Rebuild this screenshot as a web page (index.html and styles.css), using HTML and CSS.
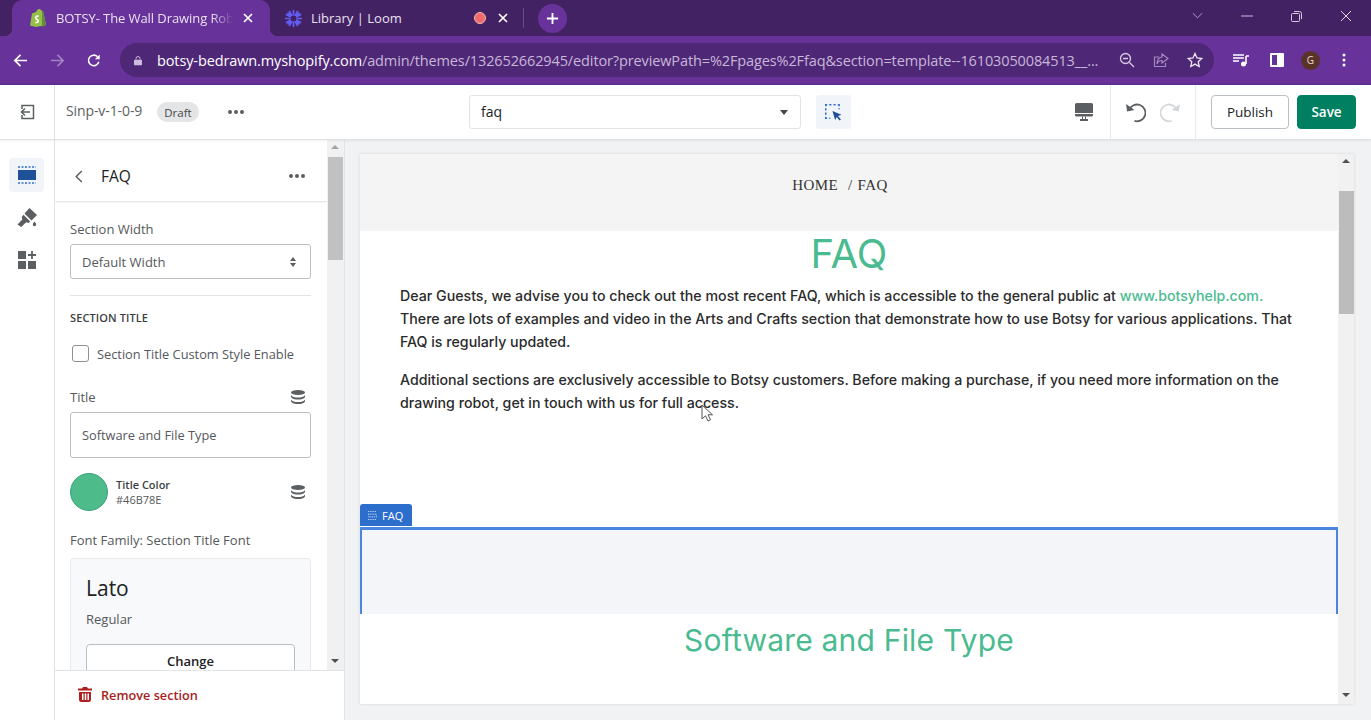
FILE: index.html
```html
<!DOCTYPE html>
<html lang="en">
<head>
<meta charset="utf-8">
<title>Botsy theme editor</title>
<link rel="stylesheet" href="styles.css">
</head>
<body>
<div class="tabstrip">
  <div class="tab active">
    <svg class="fav" viewBox="0 0 16 18"><path fill="#95bf47" d="M2 4.500 6 3c.6-1.500 1.700-3 3-3 1 0 2 .6 2.400 1.500L13 2l3 14-10 2-6-1.500z"/><path fill="#5e8e3e" d="M12 2l1 0 3 14-4 2z"/><path fill="#fff" d="M8.800 6.500l-.5 1.600c-1.500-.6-2.300.2-1.600.9.800.8 2.300 1.300 2.300 3 0 2-2.200 3-4 1.900l.4-1.500c1 .7 2 .5 2-.2 0-1-2.500-1.400-2.500-3.500 0-2 2.200-3.200 3.900-2.200z"/></svg>
    <span class="tab-title">BOTSY- The Wall Drawing Robo</span>
    <svg class="tab-x" viewBox="0 0 10 10"><path d="M1 1l8 8M9 1 1 9" stroke="#fff" stroke-width="1.700"/></svg>
  </div>
  <div class="tab second">
    <svg class="fav" viewBox="0 0 20 20"><g stroke="#625df5" stroke-width="2"><path d="M10 0v20M0 10h20M3 3l14 14M17 3 3 17M5 1l10 18M15 1 5 19M1 5l18 10M19 5 1 15"/></g><circle cx="10" cy="10" r="3.500" fill="#42215f"/></svg>
    <span class="tab-title">Library | Loom</span>
    <span class="rec"></span>
    <svg class="tab-x" viewBox="0 0 10 10"><path d="M1 1l8 8M9 1 1 9" stroke="#fff" stroke-width="1.700"/></svg>
  </div>
  <span class="tab-sep"></span>
  <span class="newtab"><svg viewBox="0 0 14 14"><path d="M7 1v12M1 7h12" stroke="#fff" stroke-width="2"/></svg></span>
  <div class="winctl">
    <svg viewBox="0 0 12 8" class="w-chev"><path d="M1 1l5 5 5-5" fill="none" stroke="#b9a7cb" stroke-width="1"/></svg>
    <svg viewBox="0 0 12 2" class="w-min"><path d="M0 1h12" stroke="#c9bcd6"/></svg>
    <svg viewBox="0 0 12 12" class="w-max"><path d="M1.500 3.500h6a1 1 0 0 1 1 1v6a1 1 0 0 1-1 1h-6a1 1 0 0 1-1-1v-6a1 1 0 0 1 1-1zM3 1.500h5.500a2 2 0 0 1 2 2V9" fill="none" stroke="#d6cbe0"/></svg>
    <svg viewBox="0 0 12 12" class="w-close"><path d="M1 1l10 10M11 1 1 11" stroke="#e4dcea" stroke-width="1"/></svg>
  </div>
</div>

<div class="toolbar">
  <svg class="nav" viewBox="0 0 16 16"><path d="M15 8H2M8 2 2 8l6 6" fill="none" stroke="#fff" stroke-width="1.800"/></svg>
  <svg class="nav" viewBox="0 0 16 16"><path d="M1 8h13M8 2l6 6-6 6" fill="none" stroke="#a184c0" stroke-width="1.800"/></svg>
  <svg class="nav" viewBox="0 0 16 16"><path d="M13.500 9.500A6 6 0 1 1 12 3.700" fill="none" stroke="#fff" stroke-width="1.800"/><path d="M14.500 1v5.500H9z" fill="#fff"/></svg>
  <div class="omnibox">
    <svg class="lock" viewBox="0 0 10 12"><path d="M2.500 5V3.500a2.500 2.500 0 0 1 5 0V5" fill="none" stroke="#cdbddc" stroke-width="1.200"/><rect y="5" width="10" height="7" rx="1" fill="#cdbddc"/></svg>
    <span class="url"><b>botsy-bedrawn.myshopify.com</b>/admin/themes/132652662945/editor?previewPath=%2Fpages%2Ffaq&amp;section=template--16103050084513__...</span>
    <svg class="omni-ic" viewBox="0 0 16 16"><circle cx="6.500" cy="6.500" r="5" fill="none" stroke="#d8cbe4" stroke-width="1.300"/><path d="M10.500 10.500 15 15M4 6.500h5" stroke="#d8cbe4" stroke-width="1.300"/></svg>
    <svg class="omni-ic" viewBox="0 0 16 16"><path d="M6 5H1.500v9.500h11V11M9 2l6 4.500L9 11V8.500C6 8.500 4.500 10 4 12c0-4 2-6.500 5-7z" fill="none" stroke="#a58ac0" stroke-width="1.200"/></svg>
    <svg class="omni-ic" viewBox="0 0 16 16"><path d="M8 1.500l2 4.500 4.800.5-3.600 3.200 1 4.800L8 12.100l-4.200 2.400 1-4.800L1.200 6.500 6 6z" fill="none" stroke="#ece5f2" stroke-width="1.300"/></svg>
  </div>
  <div class="ext">
    <svg viewBox="0 0 16 14" class="ext-media"><path d="M0 2h11M0 5h11M0 8h6" stroke="#fff" stroke-width="1.500"/><path d="M13 3v8" stroke="#fff" stroke-width="1.600"/><circle cx="10.500" cy="11" r="2.500" fill="#fff"/><path d="M13 3h3" stroke="#fff" stroke-width="1.500"/></svg>
    <svg viewBox="0 0 14 14" class="ext-side"><rect width="14" height="14" rx="1" fill="#fff"/><rect x="2" y="2" width="5" height="10" fill="#67329a"/></svg>
    <span class="avatar">G</span>
    <svg viewBox="0 0 4 14" class="ext-menu"><circle cx="2" cy="2" r="1.500" fill="#fff"/><circle cx="2" cy="7" r="1.500" fill="#fff"/><circle cx="2" cy="12" r="1.500" fill="#fff"/></svg>
  </div>
</div>

<div class="topbar">
  <div class="exit">
    <svg viewBox="0 0 16 16"><path d="M3 5V1.500h11.500v13H3V11" fill="none" stroke="#5c5f62" stroke-width="1.500"/><path d="M11 8H3M6 4.500 2.500 8 6 11.500" fill="none" stroke="#5c5f62" stroke-width="1.500"/></svg>
  </div>
  <div class="theme-info">
    <span class="theme-name">Sinp-v-1-0-9</span>
    <span class="badge">Draft</span>
    <svg class="dots" viewBox="0 0 16 4"><circle cx="2" cy="2" r="2"/><circle cx="8" cy="2" r="2"/><circle cx="14" cy="2" r="2"/></svg>
  </div>
  <div class="page-select"><span>faq</span><i class="caret"></i></div>
  <span class="inspect">
    <svg viewBox="0 0 16 16"><path d="M0 .7h13M.7 0v13" stroke="#2c6ecb" stroke-width="1.400" stroke-dasharray="2 2" fill="none"/><path d="M13.300 0v5M0 13.300h5" stroke="#2c6ecb" stroke-width="1.400" stroke-dasharray="2 2" fill="none"/><path d="M7 6.500 15.500 10l-3.200 1.300 2.700 3.200-1.300 1-2.600-3.200L9.500 15z" fill="#1f5199"/></svg>
  </span>
  <div class="top-right">
    <svg class="desktop" viewBox="0 0 18 18"><path fill="#5c5f62" d="M1.500 0h15A1.500 1.500 0 0 1 18 1.500V12a1.500 1.500 0 0 1-1.500 1.500h-15A1.500 1.500 0 0 1 0 12V1.500A1.500 1.500 0 0 1 1.500 0z"/><path fill="#fff" d="M0 10h18v1H0z"/><path fill="#5c5f62" d="M7 13.500h1v2.500h2v-2.500h1V16h2v2H5v-2h2z"/></svg>
    <div class="history">
      <svg viewBox="0 0 20 20"><path d="M4 7.500A8 8 0 1 1 9 18" fill="none" stroke="#5c5f62" stroke-width="1.700"/><path d="M1 2l1 7 7-1.500z" fill="#5c5f62"/></svg>
      <svg viewBox="0 0 20 20"><path d="M16 7.500A8 8 0 1 0 11 18" fill="none" stroke="#d5d8da" stroke-width="1.700"/><path d="M19 2l-1 7-7-1.500z" fill="#d5d8da"/></svg>
    </div>
    <div class="actions">
      <span class="btn">Publish</span>
      <span class="btn primary">Save</span>
    </div>
  </div>
</div>

<div class="main">
  <nav class="rail">
    <span class="rail-item on">
      <svg viewBox="0 0 18 18"><path d="M0 1h18M0 17h18" stroke="#2c6ecb" stroke-width="1.600" stroke-dasharray="2 1.500"/><rect y="4" width="18" height="10" fill="#1f5199"/></svg>
    </span>
    <span class="rail-item">
      <svg viewBox="0 0 20 20"><path fill="#5c5f62" d="M12.500 0 20 7l-5.500 5.500-7-7zM6.500 6.800l6.700 6.700-1.800 1.500-2.200-.8-5 4.800L.5 16.500l4.800-5-.6-2.500z"/><path fill="#5c5f62" d="M17.500 13.500c1 1.300 1.700 2 1.700 3a1.700 1.700 0 0 1-3.400 0c0-1 .7-1.700 1.700-3z"/></svg>
    </span>
    <span class="rail-item">
      <svg viewBox="0 0 18 18"><path fill="#5c5f62" d="M0 0h8v8H0zM0 10h8v8H0zM10 10h8v8h-8z"/><path d="M14 0v8M10 4h8" stroke="#5c5f62" stroke-width="1.800"/></svg>
    </span>
  </nav>

  <aside class="panel">
    <div class="panel-scroll">
      <div class="panel-body">
        <header class="panel-head">
          <svg class="back" viewBox="0 0 8 14"><path d="M7 1 1 7l6 6" fill="none" stroke="#5c5f62" stroke-width="1.600"/></svg>
          <h2>FAQ</h2>
          <svg class="dots" viewBox="0 0 16 4"><circle cx="2" cy="2" r="2"/><circle cx="8" cy="2" r="2"/><circle cx="14" cy="2" r="2"/></svg>
        </header>
        <div class="settings">
          <label class="lbl first">Section Width</label>
          <div class="select"><span>Default Width</span>
            <svg viewBox="0 0 6 10"><path d="M3 0l3 4H0zM3 10 0 6h6z" fill="#5c5f62"/></svg>
          </div>
          <hr class="rule">
          <h3 class="cap">SECTION TITLE</h3>
          <div class="check"><span class="box"></span><span>Section Title Custom Style Enable</span></div>
          <div class="lbl-row"><span class="lbl">Title</span>
            <svg class="db" viewBox="0 0 14 14"><ellipse cx="7" cy="2.500" rx="7" ry="2.500"/><path d="M0 5c1 2 4 2.500 7 2.500S13 7 14 5v2c-1 2-4 2.500-7 2.500S1 9 0 7zM0 9.500c1 2 4 2.500 7 2.500s6-.5 7-2.500v2C13 13.500 10 14 7 14s-6-.5-7-2.500z"/></svg>
          </div>
          <div class="input">Software and File Type</div>
          <div class="color-row">
            <span class="swatch"></span>
            <div class="color-text"><b>Title Color</b><span>#46B78E</span></div>
            <svg class="db" viewBox="0 0 14 14"><ellipse cx="7" cy="2.500" rx="7" ry="2.500"/><path d="M0 5c1 2 4 2.500 7 2.500S13 7 14 5v2c-1 2-4 2.500-7 2.500S1 9 0 7zM0 9.500c1 2 4 2.500 7 2.500s6-.5 7-2.500v2C13 13.500 10 14 7 14s-6-.5-7-2.500z"/></svg>
          </div>
          <label class="lbl font-lbl">Font Family: Section Title Font</label>
          <div class="font-card">
            <div class="font-name">Lato</div>
            <div class="font-style">Regular</div>
            <div class="change">Change</div>
          </div>
        </div>
      </div>
      <div class="scrollbar">
        <i class="arrow up light"></i>
        <span class="thumb"></span>
        <i class="arrow down"></i>
      </div>
    </div>
    <footer class="panel-foot">
      <svg viewBox="0 0 14 15"><path fill="#b01f1f" d="M5 0h4l1 1.500h4v2H0v-2h4zM1 5h12v7.500a2.500 2.500 0 0 1-2.500 2.500h-7A2.500 2.500 0 0 1 1 12.500zm3 1.500V13h1.500V6.500zm2.700 0V13h1.600V6.500zm2.800 0V13H11V6.500z"/></svg>
      <span>Remove section</span>
    </footer>
  </aside>

  <section class="stage">
    <div class="frame">
      <div class="page">
        <div class="crumbs"><span>HOME</span><span class="slash">/</span><span>FAQ</span></div>
        <h1 class="page-title">FAQ</h1>
        <div class="copy">
          <p>Dear Guests, we advise you to check out the most recent FAQ, which is accessible to the general public at <a>www.botsyhelp.com.</a><br>There are lots of examples and video in the Arts and Crafts section that demonstrate how to use Botsy for various applications. That FAQ is regularly updated.</p>
          <p>Additional sections are exclusively accessible to Botsy customers. Before making a purchase, if you need more information on the drawing robot, get in touch with us for full access.</p>
        </div>
        <div class="selected">
          <span class="sel-tag">
            <svg viewBox="0 0 10 10"><path d="M0 .5h10M0 9.500h10M0 3.500h10v3H0z" fill="none" stroke="#cfe0f7" stroke-dasharray="1.500 1"/></svg>
            FAQ
          </span>
        </div>
        <h2 class="sec-title">Software and File Type</h2>
      </div>
      <div class="page-scroll">
        <i class="arrow up dark"></i>
        <span class="page-thumb"></span>
        <i class="arrow down dark"></i>
      </div>
    </div>
    <svg class="cursor" viewBox="0 0 12 18"><path d="M1 1v14l3.500-3.200L7 17l2.500-1.200L7 10.800h4.500z" fill="#fff" stroke="#555" stroke-width="1"/></svg>
  </section>
</div>
</body>
</html>
```
FILE: styles.css
```css
* { box-sizing: border-box; }
html, body { margin: 0; height: 720px; overflow: hidden; }
body {
  width: 1371px;
  display: flex;
  flex-direction: column;
  font-family: "Open Sans", "Noto Sans", sans-serif;
  color: #202223;
  background: #fff;
}
svg { display: block; flex: none; }

/* browser tabs */
.tabstrip {
  height: 36px;
  flex: none;
  background: #432263;
  display: flex;
  align-items: center;
  padding-left: 12px;
  color: #e9e1f0;
  font-size: 13px;
}
.tab { height: 36px; display: flex; align-items: center; flex: none; }
.tab.active {
  width: 258px;
  background: #67329a;
  border-radius: 10px 10px 0 0;
  padding-left: 18px;
  position: relative;
}
.tab.active::before, .tab.active::after {
  content: "";
  position: absolute;
  bottom: 0;
  width: 8px;
  height: 8px;
}
.tab.active::before { left: -8px; background: radial-gradient(circle at 0 0, transparent 8px, #67329a 8.500px); }
.tab.active::after { right: -8px; background: radial-gradient(circle at 100% 0, transparent 8px, #67329a 8.500px); }
.tab.second { width: 243px; padding-left: 15px; }
.fav { width: 16px; height: 18px; margin-right: 10px; }
.second .fav { width: 17px; height: 17px; margin-right: 9px; }
.tab-title { white-space: nowrap; flex: none; }
.active .tab-title {
  width: 177px;
  -webkit-mask-image: linear-gradient(90deg, #000 88%, transparent);
  mask-image: linear-gradient(90deg, #000 88%, transparent);
  letter-spacing: -.08px;
}
.second .tab-title { width: 163px; }
.tab-x { width: 10px; height: 10px; margin-left: 10px; }
.second .tab-x { margin-left: 12px; }
.rec {
  width: 12px; height: 12px; border-radius: 50%;
  background: #ef6b6b; border: 1px solid #f4b7b7;
  flex: none;
}
.tab-sep { width: 1px; height: 20px; background: #6b4a8a; margin-left: 10px; flex: none; }
.newtab {
  width: 29px; height: 29px; border-radius: 50%;
  background: #67329a; margin-left: 14px; flex: none;
  display: flex; align-items: center; justify-content: center;
}
.newtab svg { width: 13px; height: 13px; }
.winctl { margin: 0 0 4px auto; display: flex; align-items: center; padding-right: 19px; height: 24px; }
.w-chev { width: 11px; height: 8px; margin-right: 38px; }
.w-min { width: 12px; height: 2px; margin-right: 38px; }
.w-max { width: 12px; height: 12px; margin-right: 37px; }
.w-close { width: 12px; height: 12px; }

/* address bar */
.toolbar {
  height: 49px;
  flex: none;
  background: #67329a;
  border-bottom: 2px solid #5e2f90;
  display: flex;
  align-items: center;
  padding: 1px 0 0 13px;
}
.nav { width: 15px; height: 15px; margin-right: 22px; }
.nav:nth-of-type(3) { width: 14px; margin-right: 19px; }
.omnibox {
  width: 1094px;
  height: 34px;
  border-radius: 17px;
  background: #4e2777;
  display: flex;
  align-items: center;
  padding-left: 14px;
  color: #c8b8d8;
  font-size: 14.500px;
}
.lock { width: 8px; height: 11px; margin-right: 15px; }
.url { white-space: nowrap; width: 953px; letter-spacing: -.12px; flex: none; }
.url b { font-weight: 400; color: #fff; }
.omni-ic { width: 16px; height: 16px; margin-left: 18px; }
.url + .omni-ic { margin-left: 9px; }
.ext { display: flex; align-items: center; padding-left: 19px; }
.ext-media { width: 16px; height: 14px; margin-right: 21px; }
.ext-side { width: 14px; height: 14px; margin-right: 17px; }
.avatar {
  width: 19px; height: 19px; border-radius: 50%;
  background: #5a3328; color: #e8dcd8;
  font-size: 10px; text-align: center; line-height: 19px;
  margin-right: 22px;
}
.ext-menu { width: 4px; height: 14px; }

/* editor top bar */
.topbar {
  height: 55px;
  flex: none;
  background: #fff;
  border-bottom: 1px solid #dfe3e8;
  display: flex;
  align-items: center;
  box-shadow: 0 1px 2px rgba(0,0,0,.06);
  position: relative;
  z-index: 2;
}
.exit {
  width: 55px; height: 100%;
  border-right: 1px solid #e1e3e5;
  display: flex; align-items: center; justify-content: center;
}
.exit svg { width: 16px; height: 16px; margin-left: -1px; }
.theme-info { width: 414px; display: flex; align-items: center; padding-left: 11px; }
.theme-name { font-size: 14px; color: #5c5f62; letter-spacing: -.1px; margin-bottom: 3px; }
.badge {
  margin-left: 15px; height: 20px; padding: 0 7px;
  border-radius: 10px; background: #e4e5e7;
  font-size: 11.500px; line-height: 21px; color: #44474a;
}
.dots { width: 16px; height: 4px; fill: #5c5f62; }
.theme-info .dots { margin-left: 29px; }
.page-select {
  width: 332px; height: 34px;
  border: 1px solid #e1e3e5; border-radius: 3px;
  display: flex; align-items: center; justify-content: space-between;
  padding: 0 12px 2px 11px; font-size: 14px; color: #202223;
}
.caret { width: 0; height: 0; border: 4.500px solid transparent; border-top: 5px solid #44474a; border-bottom: 0; margin-top: 2px; }
.inspect {
  width: 35px; height: 34px; margin-left: 15px;
  background: #f1f4f9; border-radius: 3px;
  display: flex; align-items: center; justify-content: center;
}
.inspect svg { width: 17px; height: 17px; }
.top-right { margin-left: auto; display: flex; align-items: center; height: 100%; }
.desktop { width: 18px; height: 18px; margin-right: 17px; }
.history {
  width: 86px; height: 100%;
  border-left: 1px solid #e9eaec; border-right: 1px solid #e9eaec;
  display: flex; align-items: center; padding-left: 14px; gap: 14px;
}
.history svg { width: 21px; height: 21px; }
.actions { width: 175px; display: flex; align-items: center; gap: 8px; padding-left: 15px; }
.btn {
  width: 78px; height: 34px;
  border: 1px solid #babfc3; border-radius: 4px;
  font-size: 13.500px; font-weight: 500; text-align: center; line-height: 32px; color: #202223;
}
.btn.primary { width: 59px; background: #008060; border-color: #008060; color: #fff; font-weight: 600; }

/* main */
.main { flex: 1; min-height: 0; display: flex; }
.rail {
  width: 55px; flex: none;
  background: #fff; border-right: 1px solid #e1e3e5;
  display: flex; flex-direction: column; align-items: center;
  padding-top: 18px; padding-right: 1px; gap: 9px;
}
.rail-item {
  width: 35px; height: 34px; border-radius: 4px;
  display: flex; align-items: center; justify-content: center;
}
.rail-item:last-child { margin-top: -1px; }
.rail-item.on { background: #f1f4f9; }
.rail-item svg { width: 18px; height: 18px; }
.rail-item:nth-child(2) svg { width: 20px; height: 20px; }

.panel {
  width: 290px; flex: none;
  background: #fff; border-right: 1px solid #e1e3e5;
  display: flex; flex-direction: column;
  min-height: 0;
}
.panel-scroll { flex: 1; min-height: 0; display: flex; overflow: hidden; }
.panel-body { flex: 1; min-width: 0; overflow: hidden; }
.panel-head {
  height: 61px;
  display: flex; align-items: center;
  padding: 11px 22px 0 20px;
  box-shadow: 0 1px 2px rgba(0,0,0,.13);
}
.back { width: 8px; height: 13px; }
.panel-head h2 { margin: 0 0 0 18px; font-size: 15.500px; font-weight: 500; flex: 1; color: #202223; }
.settings { padding: 0 16px 0 15px; }
.lbl { display: block; font-size: 13px; color: #55585c; }
.lbl.first { margin-top: 19px; line-height: 18px; }
.select {
  height: 35px; margin-top: 6px;
  border: 1px solid #babfc3; border-radius: 3px;
  display: flex; align-items: center; justify-content: space-between;
  padding: 0 14px 0 11px; font-size: 13px; color: #55585c;
}
.select svg { width: 6px; height: 10px; }
.rule { border: 0; border-top: 1px solid #e1e3e5; margin: 16px 0 0; }
.cap { margin: 14px 0 0; font-size: 11px; font-weight: 600; line-height: 15px; color: #3c3f42; letter-spacing: .1px; }
.check { display: flex; align-items: center; gap: 8px; margin-top: 19px; padding-left: 2px; font-size: 12.800px; color: #55585c; height: 19px; }
.box { width: 17px; height: 17px; border: 1px solid #8c9196; border-radius: 3px; flex: none; }
.lbl-row { display: flex; align-items: center; justify-content: space-between; margin-top: 25px; height: 18px; padding-right: 6px; }
.db { width: 14px; height: 14px; fill: #5c5f62; }
.input {
  height: 46px; margin-top: 6px;
  border: 1px solid #babfc3; border-radius: 3px;
  padding: 0 11px; line-height: 44px; font-size: 12.800px; color: #55585c;
}
.color-row { display: flex; align-items: center; margin-top: 15px; padding-right: 6px; }
.swatch { width: 38px; height: 38px; border-radius: 50%; background: #4dbb8a; border: 1px solid #3ea27e; flex: none; }
.color-text { flex: 1; margin-left: 8px; display: flex; flex-direction: column; font-size: 11px; line-height: 15px; color: #55585c; }
.color-text b { color: #3c3f42; font-weight: 600; }
.font-lbl { margin-top: 20px; line-height: 18px; }
.font-card {
  margin-top: 9px; height: 130px;
  background: #f8f9fb; border: 1px solid #e7e9ec; border-radius: 3px;
  padding: 15px 15px 0;
}
.font-name { font-size: 21px; line-height: 28px; color: #202223; }
.font-style { margin-top: 8px; font-size: 13px; line-height: 18px; color: #55585c; }
.change {
  margin-top: 16px; height: 36px;
  background: #fff; border: 1px solid #babfc3; border-radius: 4px;
  text-align: center; line-height: 32px; font-size: 13px; font-weight: 600; color: #202223;
}
.scrollbar {
  width: 17px; flex: none;
  background: #f1f1f1;
  position: relative;
  padding-top: 17px;
}
.thumb { display: block; width: 15px; height: 103px; margin-left: 1px; background: #c1c1c1; }
.arrow { position: absolute; left: 4px; width: 0; height: 0; border: 4.500px solid transparent; }
.arrow.up { top: 5px; border-top: 0; border-bottom: 4px solid #a3a3a3; }
.arrow.down { bottom: 7px; border-bottom: 0; border-top: 4px solid #505050; }
.panel-foot {
  height: 50px; flex: none;
  border-top: 1px solid #e1e3e5;
  display: flex; align-items: center;
  padding: 0 0 2px 23px; gap: 9px;
  font-size: 12.700px; font-weight: 600; color: #a91d1d;
}
.panel-foot svg { width: 14px; height: 15px; }

/* preview */
.stage {
  flex: 1; min-width: 0;
  background: #f1f2f4;
  padding: 14px 17px 16px 15px;
  position: relative;
}
.frame {
  height: 100%;
  display: flex;
  background: #fff;
  box-shadow: 0 0 3px rgba(0,0,0,.12);
  overflow: hidden;
}
.page { flex: 1; min-width: 0; display: flex; flex-direction: column; }
.crumbs {
  height: 77px; flex: none;
  background: #f4f4f5;
  display: flex; justify-content: center; gap: 7px;
  padding: 22px 18px 0 0;
  font-family: "Liberation Serif", serif;
  font-size: 15px; line-height: 18px; color: #333;
  letter-spacing: .4px;
}
.slash { margin-left: 3px; margin-right: -2px; }
.page-title {
  margin: 0; text-align: center;
  font-family: "Inter", sans-serif;
  font-size: 40px; font-weight: 400; line-height: 46px; color: #4abb90;
}
.copy {
  padding: 0 40px;
  font-family: "Inter", sans-serif;
  font-size: 14.200px; font-weight: 500; line-height: 23px; color: #2b2b2b;
}
.copy p { margin: 7px 0 0; }
.copy p + p { margin-top: 15px; }
.copy a { color: #4abb90; }
.selected {
  height: 87px; flex: none;
  margin-top: 113px;
  background: #f4f5f8;
  border: solid #4a86e0;
  border-width: 3px 2px 0;
  position: relative;
}
.sel-tag {
  position: absolute; left: -2px; top: -26px;
  height: 22px; padding: 0 9px 0 8px;
  background: #2c6ecb; border-radius: 3px 3px 0 0;
  color: #fff; font-size: 11px;
  display: flex; align-items: center; gap: 5px;
}
.sel-tag svg { width: 9px; height: 9px; }
.sec-title {
  margin: 9px 0 0; text-align: center;
  font-family: "Inter", sans-serif;
  font-size: 30px; font-weight: 400; line-height: 34px; color: #4abb90;
  letter-spacing: .2px;
}
.page-scroll { width: 16px; flex: none; background: #f1f1f1; position: relative; padding-top: 37px; }
.page-thumb { display: block; width: 15px; height: 123px; margin-left: 1px; background: #bcbcbc; }
.arrow.dark.up { border-bottom-color: #505050; }
.cursor { position: absolute; left: 356px; top: 264px; width: 12px; height: 18px; }
```
